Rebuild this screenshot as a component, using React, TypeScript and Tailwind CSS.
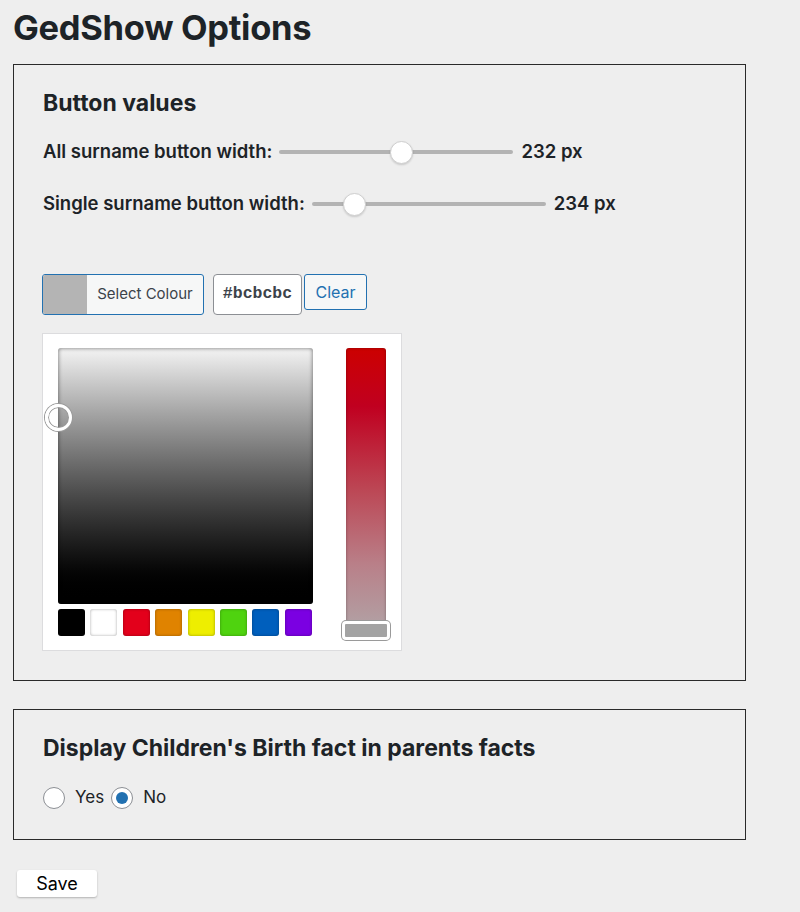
import React from "react";

const swatches = ["#000000", "#ffffff", "#e3001b", "#e08300", "#eeee00", "#4fd30f", "#005fbd", "#7b00e2"];

function SliderRow({ label, value, pos }: { label: string; value: string; pos: number }) {
  return (
    <div className="flex items-center h-[26px]">
      <span className="text-[18.5px] font-semibold text-[#1d2327]">{label}</span>
      <div className="relative ml-[7px] w-[234px] h-[4px] rounded-full bg-[#b3b3b3]">
        <div
          className="absolute top-[-9px] w-[23px] h-[23px] rounded-full bg-white border border-[#cfcfcf] shadow-[0_1px_2px_rgba(0,0,0,0.15)]"
          style={{ left: `calc(${pos * 100}% - 11px)` }}
        />
      </div>
      <span className="ml-[8px] text-[18.5px] font-semibold text-[#1d2327]">{value}</span>
    </div>
  );
}

export default function App() {
  return (
    <div className="min-h-[912px] bg-[#eeeeee] pl-[13px] pt-[8px] font-['Inter','Liberation_Sans',sans-serif] text-[#1d2327]">
      <h1 className="text-[34.5px] leading-[40px] font-bold tracking-[-0.3px]">GedShow Options</h1>

      {/* Button values */}
      <div className="mt-[16px] w-[733px] border border-[#2a2a2a] pl-[29px] pt-[24px] pb-[29px]">
        <h2 className="text-[23px] leading-[28px] font-bold">Button values</h2>
        <div className="mt-[22px] flex flex-col gap-[26px]">
          <SliderRow label="All surname button width:" value="232 px" pos={0.52} />
          <SliderRow label="Single surname button width:" value="234 px" pos={0.18} />
        </div>

        {/* colour picker */}
        <div className="mt-[57px] -ml-[1px] flex items-start">
          <button className="flex h-[41px] w-[162px] overflow-hidden rounded-[3px] border border-[#2271b1] bg-[#f6f7f7]">
            <span className="w-[44px] h-full bg-[#b4b4b4]" />
            <span className="flex-1 self-center text-[15px] text-[#3c434a]">Select Colour</span>
          </button>
          <div className="ml-[9px] flex h-[41px] w-[89px] items-center justify-center rounded-[4px] border border-[#8c8f94] bg-white font-['Liberation_Mono',monospace] text-[16.5px] font-semibold text-[#3c434a]">
            #bcbcbc
          </div>
          <button className="ml-[2px] h-[36px] w-[63px] rounded-[3px] border border-[#2271b1] bg-[#f6f7f7] text-[16px] text-[#2271b1]">
            Clear
          </button>
        </div>

        <div className="mt-[18px] -ml-[1px] flex w-[360px] h-[318px] border border-[#dcdcde] bg-white pl-[15px] pt-[14px]">
          <div className="flex flex-col">
            <div className="relative w-[255px] h-[256px] rounded-[3px] bg-linear-to-b from-[#f4f4f4] to-black shadow-[inset_0_0_4px_rgba(0,0,0,0.55)]">
              <div className="absolute left-[-13px] top-[56px] w-[27px] h-[27px] rounded-full border-[3px] border-white shadow-[0_0_0_1px_#9a9a9a,inset_0_0_0_1px_#9a9a9a]" />
            </div>
            <div className="mt-[5px] flex gap-[5.4px]">
              {swatches.map((c) => (
                <div
                  key={c}
                  className="w-[27px] h-[27px] rounded-[3px] shadow-[inset_0_0_3px_rgba(0,0,0,0.35)]"
                  style={{ backgroundColor: c }}
                />
              ))}
            </div>
          </div>
          <div className="relative ml-[33px] w-[40px] h-[293px] rounded-[3px] bg-[linear-gradient(to_bottom,#cc0000_0%,#c00020_20%,#bc4654_48%,#b98089_74%,#b0a8aa_100%)] shadow-[inset_0_0_3px_rgba(0,0,0,0.35)]">
            <div className="absolute left-[-4px] bottom-[1px] w-[48px] h-[19px] rounded-[4px] border-[3px] border-white bg-[#a3a3a3] shadow-[0_0_0_1px_#9a9a9a]" />
          </div>
        </div>
      </div>

      {/* Children's birth */}
      <div className="mt-[28px] w-[733px] border border-[#2a2a2a] pl-[29px] pt-[24px] pb-[28px]">
        <h2 className="text-[23px] leading-[28px] font-bold">Display Children's Birth fact in parents facts</h2>
        <div className="mt-[23px] flex items-center text-[17px]">
          <span className="w-[22px] h-[22px] rounded-full border border-[#8c8f94] bg-white" />
          <span className="ml-[10px]">Yes</span>
          <span className="ml-[7px] flex w-[22px] h-[22px] items-center justify-center rounded-full border border-[#8c8f94] bg-white">
            <span className="w-[12px] h-[12px] rounded-full bg-[#2271b1]" />
          </span>
          <span className="ml-[10px]">No</span>
        </div>
      </div>

      <button className="mt-[30px] ml-[4px] h-[27px] w-[80px] rounded-[3px] bg-white text-[18px] text-black shadow-[0_1px_2px_rgba(0,0,0,0.25)]">
        Save
      </button>
    </div>
  );
}
